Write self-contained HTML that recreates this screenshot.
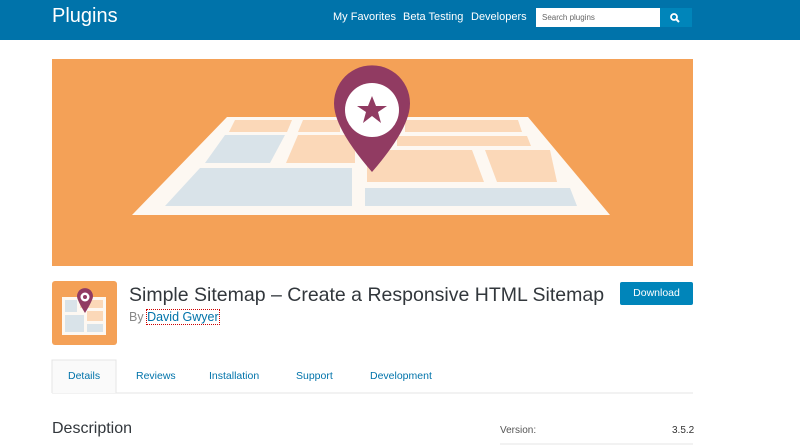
<!DOCTYPE html>
<html><head><style>
*{margin:0;padding:0;box-sizing:border-box}
body{width:800px;height:448px;overflow:hidden;background:#fff;font-family:"Liberation Sans",sans-serif;position:relative}
.hd{position:absolute;left:0;top:0;width:800px;height:40px;background:#0073aa}
.abs{position:absolute}
</style></head><body>
<div class="hd"></div>
<div class="abs" style="left:52px;top:5px;color:#fff;font-size:20px">Plugins</div>
<div class="abs" style="left:333px;top:11px;color:#fff;font-size:11px">My Favorites</div>
<div class="abs" style="left:403px;top:11px;color:#fff;font-size:11px">Beta Testing</div>
<div class="abs" style="left:471px;top:11px;color:#fff;font-size:11px">Developers</div>
<div class="abs" style="left:536px;top:8px;width:124px;height:19px;background:#fff;font-size:8px;color:#666;padding:5px 6px">Search plugins</div>
<div class="abs" style="left:660px;top:8px;width:32px;height:19px;background:#0085ba"></div>
<svg class="abs" style="left:668px;top:11px" width="14" height="14" viewBox="0 0 14 14"><circle cx="6" cy="6" r="3" fill="none" stroke="#fff" stroke-width="1.8"/><path d="M8 8 L11 11" stroke="#fff" stroke-width="2"/></svg>
<svg class="abs" style="left:0;top:0" width="800" height="448">
<rect x="52" y="59" width="641" height="207" fill="#f4a157"/>
<polygon points="227,117 528,117 610,215 132,215" fill="#fdf8f2"/>
<polygon points="235,120 292,120 287,132 229,132" fill="#fbd8b8"/>
<polygon points="303,120 340,120 340,132 298,132" fill="#fbd8b8"/>
<polygon points="405,120 518,120 522,132 405,132" fill="#fbd8b8"/>
<polygon points="225,135 285,135 270,163 205,163" fill="#d9e3e9"/>
<polygon points="298,135 355,135 355,163 286,163" fill="#fbd8b8"/>
<polygon points="397,136 527,136 531,146 397,146" fill="#fbd8b8"/>
<polygon points="367,150 472,150 484,182 367,182" fill="#fbd8b8"/>
<polygon points="485,150 550,150 557,182 497,182" fill="#fbd8b8"/>
<polygon points="200,168 352,168 352,206 165,206" fill="#d9e3e9"/>
<polygon points="365,188 570,188 577,206 365,206" fill="#d9e3e9"/>
<path d="M335,112 A38,38 0 1,1 409,112 Q404,135 372,172 Q340,135 335,112 Z" fill="#913b62"/>
<circle cx="372" cy="110" r="27" fill="#fff"/>
<polygon points="372,96 376,106 387,106 378,112 381,123 372,116 363,123 366,112 357,106 368,106" fill="#913b62"/>
<rect x="52" y="281" width="65" height="64" rx="3" fill="#f4a157"/>
<rect x="62" y="297" width="44" height="38" fill="#fdf8f2"/>
<rect x="65" y="300" width="12" height="12" fill="#d9e3e9"/>
<rect x="80" y="300" width="23" height="8" fill="#fbd8b8"/>
<rect x="87" y="311" width="16" height="10" fill="#fbd8b8"/>
<rect x="65" y="315" width="19" height="17" fill="#d9e3e9"/>
<rect x="87" y="324" width="16" height="8" fill="#d9e3e9"/>
<path d="M78,300 A8,8 0 1,1 92,300 Q90,305 85,313 Q80,305 78,300 Z" fill="#913b62"/>
<circle cx="85" cy="297" r="4.5" fill="#fff"/>
<circle cx="85" cy="297" r="2" fill="#913b62"/>
<line x1="52" y1="393" x2="693" y2="393" stroke="#e5e5e5"/>
<path d="M52,393 V360 H116 V393" fill="#fafafa" stroke="#e5e5e5"/>
<line x1="500" y1="444" x2="693" y2="444" stroke="#e5e5e5"/>
</svg>
<div class="abs" style="left:129px;top:284px;font-size:19.5px;color:#32373c">Simple Sitemap – Create a Responsive HTML Sitemap</div>
<div class="abs" style="left:129px;top:310px;font-size:12.5px;color:#888">By <span style="color:#0073aa;outline:1px dotted #c00">David Gwyer</span></div>
<div class="abs" style="left:620px;top:282px;width:73px;height:23px;background:#0085ba;border-radius:2px;color:#fff;font-size:10.5px;text-align:center;line-height:23px">Download</div>
<div class="abs" style="left:68px;top:370px;font-size:10.5px;color:#0073aa">Details</div>
<div class="abs" style="left:136px;top:370px;font-size:10.5px;color:#0073aa">Reviews</div>
<div class="abs" style="left:209px;top:370px;font-size:10.5px;color:#0073aa">Installation</div>
<div class="abs" style="left:296px;top:370px;font-size:10.5px;color:#0073aa">Support</div>
<div class="abs" style="left:370px;top:370px;font-size:10.5px;color:#0073aa">Development</div>
<div class="abs" style="left:52px;top:420px;font-size:16px;color:#32373c">Description</div>
<div class="abs" style="left:500px;top:425px;font-size:10px;color:#555">Version:</div>
<div class="abs" style="left:672px;top:425px;font-size:10px;color:#333">3.5.2</div>
</body></html>
